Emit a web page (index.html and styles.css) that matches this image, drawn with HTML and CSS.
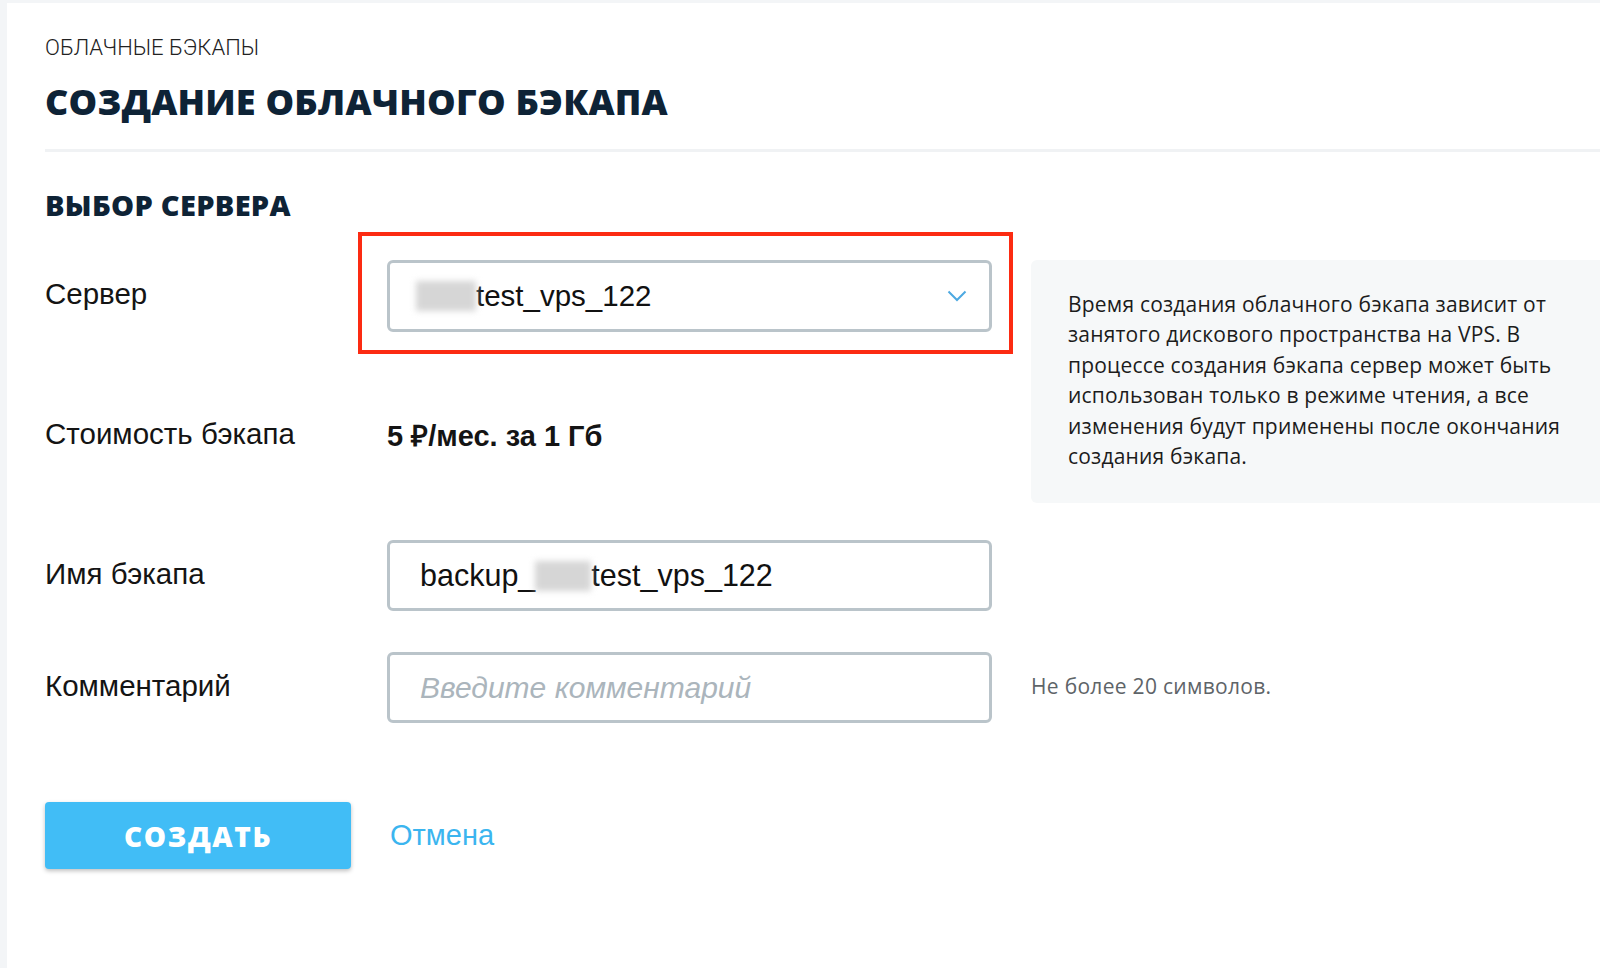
FILE: index.html
```html
<!DOCTYPE html>
<html lang="ru">
<head>
  <meta charset="UTF-8">
  <meta name="viewport" content="width=device-width, initial-scale=1.0">
  <title>Создание облачного бэкапа</title>
  <link rel="stylesheet" href="styles.css">
</head>
<body>
  <div class="page">
    <div class="breadcrumb">Облачные бэкапы</div>
    <h1 class="title">Создание облачного бэкапа</h1>
    <div class="divider"></div>

    <h2 class="section-title">Выбор сервера</h2>

    <form class="form" onsubmit="return false">
      <label class="label row-1">Сервер</label>
      <div class="control row-1">
        <div class="select">
          <span class="blur"></span>test_vps_122
          <svg class="chevron" width="20" height="12" viewBox="0 0 20 12">
            <polyline points="1.5,1.5 10,10 18.5,1.5" fill="none" stroke="#4da9e1" stroke-width="2"/>
          </svg>
        </div>
        <div class="highlight"></div>
      </div>

      <div class="info">
        Время создания облачного бэкапа зависит от<br>
        занятого дискового пространства на VPS. В<br>
        процессе создания бэкапа сервер может быть<br>
        использован только в режиме чтения, а все<br>
        изменения будут применены после окончания<br>
        создания бэкапа.
      </div>

      <label class="label row-2">Стоимость бэкапа</label>
      <div class="price row-2">5 ₽/мес. за 1 Гб</div>

      <label class="label row-3">Имя бэкапа</label>
      <div class="control row-3">
        <div class="input input-name">backup_<span class="blur blur-small"></span>test_vps_122</div>
      </div>

      <label class="label row-4">Комментарий</label>
      <div class="control row-4">
        <input class="input" type="text" placeholder="Введите комментарий">
      </div>
      <div class="hint row-4">Не более 20 символов.</div>
    </form>

    <div class="actions">
      <button class="btn-create">Создать</button>
      <a class="btn-cancel" href="#">Отмена</a>
    </div>
  </div>
</body>
</html>
```

FILE: styles.css
```css
body {
  margin: 0;
  background-color: #f3f5f7;
  font-family: 'Liberation Sans', Arial, sans-serif;
  color: #141414;
  overflow: hidden;
}
.page {
  margin: 3px 0 0 7px;
  min-height: 965px;
  background-color: #fff;
  padding: 33px 0 0 38px;
  box-sizing: border-box;
}
.breadcrumb {
  font-family: 'Roboto', sans-serif;
  font-weight: 300;
  font-size: 22px;
  line-height: 24px;
  text-transform: uppercase;
  color: #222;
}
.title {
  margin: 20px 0 0;
  font-family: 'Open Sans', sans-serif;
  font-weight: 800;
  font-size: 36px;
  line-height: 44px;
  letter-spacing: 0.2px;
  text-transform: uppercase;
  color: #0e2336;
}
.divider {
  margin-top: 25px;
  height: 3px;
  background-color: #f0f2f4;
}
.section-title {
  margin: 37px 0 0;
  font-family: 'Open Sans', sans-serif;
  font-weight: 800;
  font-size: 29px;
  line-height: 32px;
  letter-spacing: 0.3px;
  text-transform: uppercase;
  color: #0e2336;
}
.form {
  margin-top: 39px;
  display: grid;
  grid-template-columns: 342px 605px 620px;
  grid-template-rows: 72px 126px 71px 71px;
  row-gap: 41px;
  align-items: center;
}
.row-1 { grid-row: 1; }
.row-2 { grid-row: 2; }
.row-3 { grid-row: 3; }
.row-4 { grid-row: 4; }
.label {
  grid-column: 1;
  font-size: 29.5px;
  line-height: 34px;
  padding-bottom: 4px;
}
.control {
  grid-column: 2;
  position: relative;
  height: 100%;
}
.select, .input {
  box-sizing: border-box;
  width: 100%;
  height: 100%;
  border: 3px solid #bac4ca;
  border-radius: 6px;
  font-family: 'Liberation Sans', Arial, sans-serif;
  font-size: 29.5px;
  color: #111;
  display: flex;
  align-items: center;
  padding: 0 0 0 30px;
  outline: none;
}
.select {
  padding-left: 26px;
}
.input-name {
  font-size: 30.5px;
}
.blur {
  display: inline-block;
  width: 60px;
  height: 30px;
  background-color: #d6d6d6;
  filter: blur(3px);
}
.blur-small {
  width: 56px;
}
.chevron {
  margin-left: auto;
  margin-right: 22px;
}
.input::placeholder {
  font-style: italic;
  font-size: 30px;
  color: #abb5bc;
}
.highlight {
  position: absolute;
  left: -29px;
  top: -28px;
  width: 655px;
  height: 122px;
  box-sizing: border-box;
  border: 4px solid #fc2b12;
  pointer-events: none;
}
.info {
  grid-column: 3;
  grid-row: 1 / span 2;
  align-self: start;
  margin-left: 39px;
  height: 243px;
  box-sizing: border-box;
  padding: 29px 0 0 37px;
  background-color: #f6f8f9;
  border-radius: 6px;
  font-family: 'Open Sans', sans-serif;
  font-size: 21px;
  line-height: 30.4px;
  letter-spacing: 0.2px;
  white-space: nowrap;
  color: #1c1c1c;
}
.price {
  grid-column: 2;
  font-weight: bold;
  font-size: 29px;
  padding-bottom: 4px;
}
.hint {
  grid-column: 3;
  margin-left: 39px;
  padding-bottom: 4px;
  font-family: 'Open Sans', sans-serif;
  font-size: 21px;
  letter-spacing: 0.3px;
  color: #5e6468;
}
.actions {
  margin-top: 79px;
  display: flex;
  align-items: center;
  gap: 39px;
}
.btn-create {
  width: 306px;
  height: 67px;
  border: none;
  border-radius: 4px;
  background-color: #41bdf6;
  box-shadow: 0 2px 4px rgba(0, 0, 0, 0.25);
  color: #fff;
  font-family: 'Open Sans', sans-serif;
  font-weight: 800;
  font-size: 28px;
  letter-spacing: 1.6px;
  text-transform: uppercase;
  cursor: pointer;
}
.btn-cancel {
  font-size: 29px;
  color: #3bb5ef;
  text-decoration: none;
}
```
